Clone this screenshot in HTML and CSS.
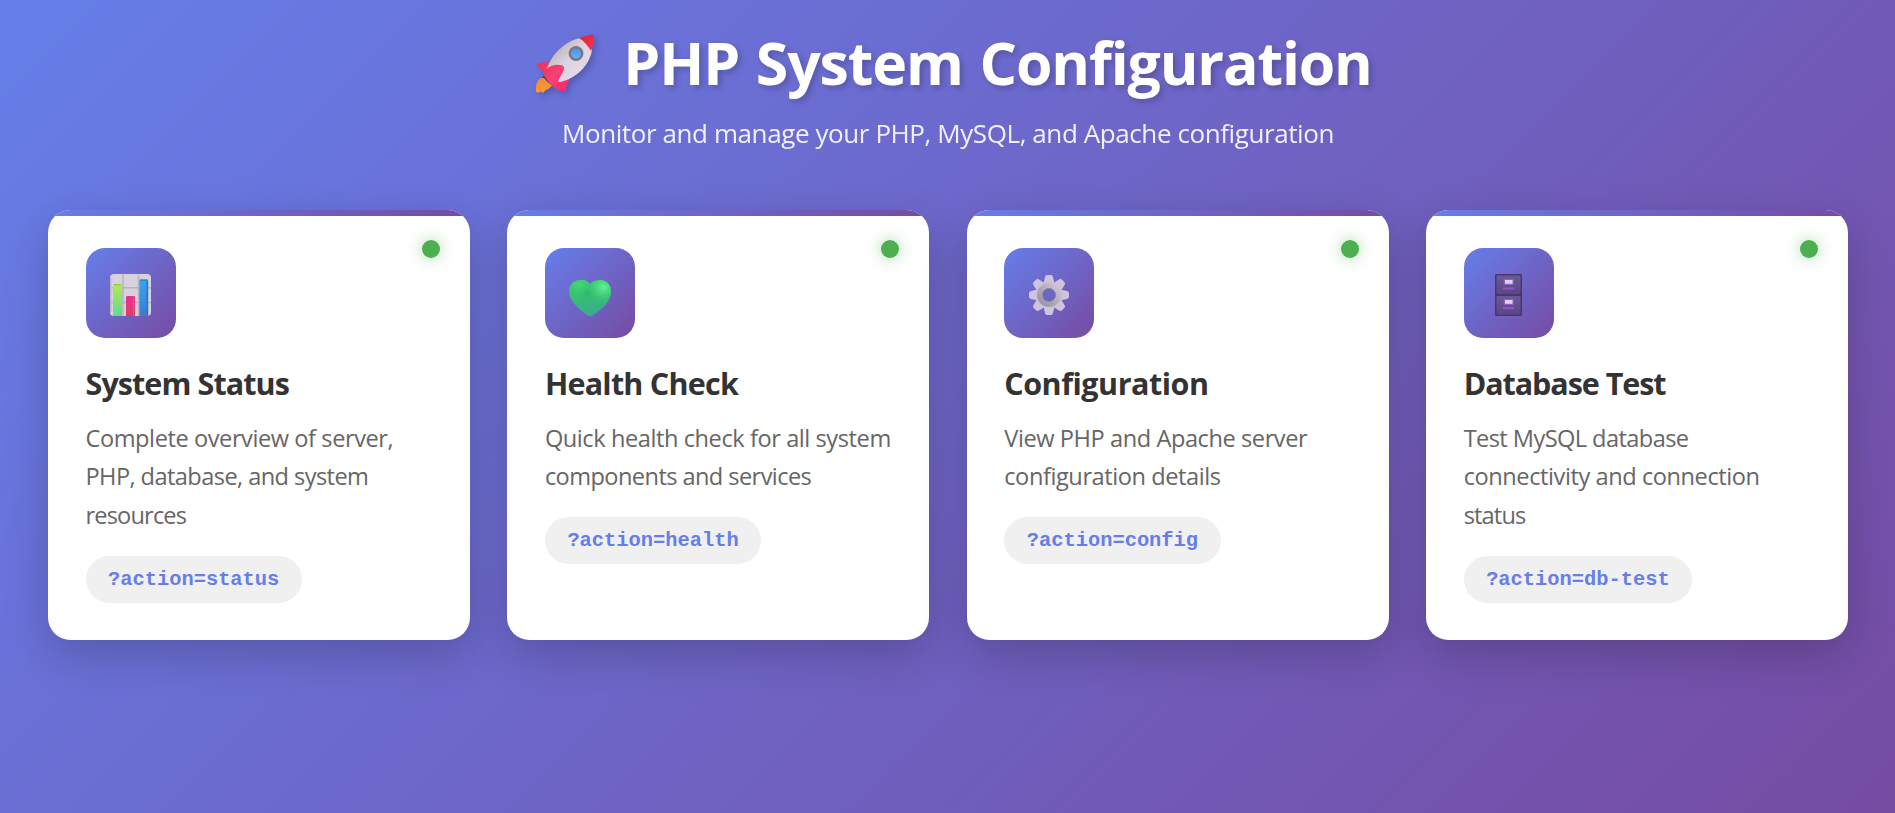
FILE: index.html
```html
<!DOCTYPE html>
<html lang="en">
<head>
<meta charset="utf-8">
<title>PHP System Configuration</title>
<link rel="stylesheet" href="styles.css">
</head>
<body>
<div class="container">
  <header class="header">
    <h1 class="title">
      <svg class="rocket" viewBox="0 0 100 85" aria-hidden="true">
        <defs>
          <linearGradient id="hull" x1="0" y1="0" x2="1" y2="1"><stop offset=".15" stop-color="#b9b1b8"/><stop offset=".5" stop-color="#dcd4df"/><stop offset="1" stop-color="#eadcf2"/></linearGradient>
          <linearGradient id="fin" x1="0" y1="0" x2="1" y2="1"><stop offset="0" stop-color="#e83558"/><stop offset=".5" stop-color="#ff3f78"/><stop offset="1" stop-color="#f02866"/></linearGradient>
          <linearGradient id="nose" x1="0" y1="0" x2="1" y2="1"><stop offset="0" stop-color="#c82b45"/><stop offset=".5" stop-color="#f0283e"/><stop offset="1" stop-color="#f63569"/></linearGradient>
          <linearGradient id="flame" x1="0" y1="0" x2="0" y2="1"><stop offset="0" stop-color="#f08a3a"/><stop offset="1" stop-color="#fb9a2c"/></linearGradient>
          <linearGradient id="glass" x1="0" y1="0" x2="0" y2="1"><stop offset="0" stop-color="#4593ea"/><stop offset="1" stop-color="#64b4ff"/></linearGradient>
        </defs>
        <path d="M25 55l8 12-3 2-7-11z" fill="#4c3f72"/>
        <path d="M23 58c-4 1-6 5-6 10v3c0 1 1 2 2 1.500l3-1 2 1.500 2-2.500c3-1 6-3 7-5-3-2-6-5-8-7.500z" fill="url(#flame)"/>
        <path d="M30 42l-10 1c-1 .5-2 1.500-2 3l10 8zM49 54l1 5-4 12c0 1-1 1.500-2 1L33 61z" fill="url(#fin)"/>
        <path d="M61 18C47 21 33 33 28 49c-1 3 0 5 2 7l7 5c2 1.500 4 1.300 6 .5C60 57 71 43 73 30c-3-6-7-9-12-12z" fill="url(#hull)"/>
        <path d="M24 53c3-4 8-8 12-8 4-.5 8 0 9 2 1 4-5 10-6 16l6 9C37 71 29 63 24 53z" fill="url(#fin)"/>
        <path d="M60 18l10-3c4-1 6 0 5 4-.5 4-1.500 8-3 12-3-5-7-10-12-13z" fill="url(#nose)"/>
        <circle cx="57" cy="33.500" r="7.400" fill="#7b7585"/><circle cx="57" cy="33.500" r="5" fill="url(#glass)"/>
      </svg>
      <span class="title-text">PHP System Configuration</span>
    </h1>
    <p class="subtitle">Monitor and manage your PHP, MySQL, and Apache configuration</p>
  </header>
  <main class="grid">
    <article class="card">
      <span class="dot"></span>
      <div class="icon">
        <svg class="glyph" viewBox="0 0 90 90" aria-hidden="true">
          <defs>
            <linearGradient id="lime" x1="0" y1="0" x2="0" y2="1"><stop offset="0" stop-color="#b4e957"/><stop offset="1" stop-color="#60da91"/></linearGradient>
            <linearGradient id="pink" x1="0" y1="0" x2="0" y2="1"><stop offset="0" stop-color="#e83390"/><stop offset="1" stop-color="#e43a66"/></linearGradient>
            <linearGradient id="blue" x1="0" y1="0" x2="0" y2="1"><stop offset="0" stop-color="#35a5f4"/><stop offset="1" stop-color="#3b7dcc"/></linearGradient>
          </defs>
          <rect x="24" y="26" width="41" height="42" rx="4" fill="#d8d1de"/>
          <path d="M37 26.500v41M52.500 26.500v41M24 39.800h41M24 54.500h41" stroke="#b9b2c0" stroke-width="1.500"/>
          <path d="M24.700 30v34" stroke="#bdb5c4" stroke-width="1.400"/>
          <path d="M27 68V37.500c0-1 .5-1.500 1.500-1.500h6c1 0 1.500.5 1.500 1.500V68z" fill="url(#lime)"/>
          <path d="M40 68V49.500c0-1 .5-1.500 1.500-1.500h6c1 0 1.500.5 1.500 1.500V68z" fill="url(#pink)"/>
          <path d="M53.300 68V32.700c0-1 .5-1.500 1.500-1.500h6c1 0 1.500.5 1.500 1.500V68z" fill="url(#blue)"/>
          <path d="M61.200 33v34" stroke="#2d6eb8" stroke-width="1.200"/><path d="M54 32.200h7.500" stroke="#297dc5"/>
          <path d="M47.500 49.500V67" stroke="#f0507f" stroke-width="1.200"/><path d="M28 36.800h7" stroke="#83bd50"/>
        </svg>
      </div>
      <h2 class="name name-status">System Status</h2>
      <p class="desc"><span class="fit-s">Complete overview of server,</span><br><span class="fit-m">PHP, database, and system</span><br><span class="fit-l">resources</span></p>
      <code class="action">?action=status</code>
    </article>
    <article class="card">
      <span class="dot"></span>
      <div class="icon">
        <svg class="glyph" viewBox="0 0 90 90" aria-hidden="true">
          <defs>
            <linearGradient id="leaf" x1="0" y1="0" x2=".2" y2="1"><stop offset="0" stop-color="#37c86b"/><stop offset=".55" stop-color="#35bf73"/><stop offset="1" stop-color="#3caa91"/></linearGradient>
            <radialGradient id="shineR" cx=".82" cy=".2" r=".4"><stop offset="0" stop-color="#65ef91"/><stop offset="1" stop-color="#45d77b" stop-opacity="0"/></radialGradient>
            <radialGradient id="shineL" cx=".24" cy=".12" r=".34"><stop offset="0" stop-color="#46d675"/><stop offset="1" stop-color="#3fce73" stop-opacity="0"/></radialGradient>
            <radialGradient id="fold" cx=".45" cy=".32" r=".26"><stop offset="0" stop-color="#249d5e" stop-opacity=".3"/><stop offset="1" stop-color="#249d5e" stop-opacity="0"/></radialGradient>
            <path id="heart" d="M45 36c-3-4-8-5-13-3.500-5 1.500-8 5.500-8 10.500 0 10 10 18 18 24 2 1.500 4.500 1.500 6.500 0C57 61 66 54 66 43c0-6-4.500-11-10.500-11-4 0-7.500 1-10.500 4z"/>
          </defs>
          <use href="#heart" fill="url(#leaf)"/>
          <use href="#heart" fill="url(#fold)"/>
          <use href="#heart" fill="url(#shineR)"/>
          <use href="#heart" fill="url(#shineL)"/>
        </svg>
      </div>
      <h2 class="name name-health">Health Check</h2>
      <p class="desc"><span class="fit-s">Quick health check for all system</span><br><span class="fit-m">components and services</span></p>
      <code class="action">?action=health</code>
    </article>
    <article class="card">
      <span class="dot"></span>
      <div class="icon">
        <svg class="glyph" viewBox="0 0 90 90" aria-hidden="true">
          <defs>
            <linearGradient id="ring" x1="1" y1="0" x2="0" y2="1"><stop offset="0" stop-color="#cec5d3"/><stop offset="1" stop-color="#9992a4"/></linearGradient>
            <path id="tooth" d="M39 38l2-9c.4-1.500 1.200-2 2.500-2h3c1.300 0 2.100.5 2.500 2l2 9z"/>
          </defs>
          <g fill="#cfc4dd">
            <use href="#tooth"/><use href="#tooth" transform="rotate(45 45 47)"/><use href="#tooth" transform="rotate(90 45 47)"/><use href="#tooth" transform="rotate(135 45 47)"/><use href="#tooth" transform="rotate(180 45 47)"/><use href="#tooth" transform="rotate(225 45 47)"/><use href="#tooth" transform="rotate(270 45 47)"/><use href="#tooth" transform="rotate(315 45 47)"/>
            <circle cx="45" cy="47" r="10" fill="none" stroke="#cbc0d8" stroke-width="7"/>
            <circle cx="45" cy="47" r="9" fill="none" stroke="url(#ring)" stroke-width="5.800"/>
            <circle cx="45" cy="47" r="6.500" fill="#6c66c5" stroke="#8a82a0" stroke-width="1"/>
          </g>
        </svg>
      </div>
      <h2 class="name name-config">Configuration</h2>
      <p class="desc"><span class="fit-s">View PHP and Apache server</span><br><span class="fit-s">configuration details</span></p>
      <code class="action">?action=config</code>
    </article>
    <article class="card">
      <span class="dot"></span>
      <div class="icon">
        <svg class="glyph" viewBox="0 0 90 90" aria-hidden="true">
          <defs><linearGradient id="drawer" x1="0" y1="0" x2="0" y2="1"><stop offset="0" stop-color="#6a5998"/><stop offset="1" stop-color="#5d4686"/></linearGradient></defs>
          <rect x="31" y="26" width="27" height="42" rx="1.500" fill="#4c356f"/>
          <rect x="32.500" y="27.500" width="24" height="18.500" rx="1.200" fill="url(#drawer)"/>
          <rect x="32.500" y="48" width="24" height="18.500" rx="1.200" fill="url(#drawer)"/>
          <rect x="39.700" y="30.800" width="10" height="6.200" fill="#8d60c4"/><rect x="41" y="32" width="7.500" height="3.800" fill="#ded1ee"/>
          <rect x="39.700" y="50.800" width="10" height="6.200" fill="#8d60c4"/><rect x="41" y="52" width="7.500" height="3.800" fill="#ded1ee"/>
          <path d="M39 40.500h11M39 60.200h11" stroke="#8e58c8" stroke-width="2.200"/>
        </svg>
      </div>
      <h2 class="name name-database">Database Test</h2>
      <p class="desc"><span class="fit-m">Test MySQL database</span><br><span class="fit-s">connectivity and connection</span><br><span class="fit-l">status</span></p>
      <code class="action">?action=db-test</code>
    </article>
  </main>
</div>
</body>
</html>
```
FILE: styles.css
```css
* { box-sizing: border-box; margin: 0; padding: 0; }
body {
  min-height: 100vh;
  padding: 24px 30px 24px 31px;
  background: linear-gradient(135deg, #667eea 0%, #764ba2 100%);
  font-family: "Open Sans", "Noto Sans", sans-serif;
}
.container { width: 1800px; margin: 0 auto; }
.header { height: 186px; color: #fff; text-align: center; }
.title {
  display: flex;
  justify-content: center;
  align-items: center;
  height: 77px;
  font-size: 59px;
  line-height: 77px;
  letter-spacing: -1.15px;
  word-spacing: 2.6px;
  white-space: nowrap;
}
.title-text { text-shadow: 3px 3px 6px rgba(0, 0, 0, .2); }
.rocket {
  width: 100px;
  height: 85px;
  margin: 0 4px 0 -5px;
  filter: drop-shadow(3px 3px 3px rgba(0, 0, 0, .2));
}
.subtitle {
  margin-top: 14px;
  font-size: 26px;
  line-height: 36px;
  letter-spacing: -.41px;
  opacity: .9;
  white-space: nowrap;
}
.grid { display: grid; grid-template-columns: repeat(4, 1fr); gap: 37.5px; }
.card {
  position: relative;
  overflow: hidden;
  height: 429.500px;
  padding: 38px 37.5px 37px;
  border-radius: 22.5px;
  background: #fff;
  box-shadow: 0 15px 45px rgba(0, 0, 0, .2);
}
.card::before {
  content: "";
  position: absolute;
  top: 0;
  left: 0;
  right: 0;
  height: 6px;
  background: linear-gradient(90deg, #667eea, #764ba2);
}
.dot {
  position: absolute;
  top: 30px;
  right: 30px;
  width: 18px;
  height: 18px;
  border-radius: 50%;
  background: #4caf50;
  box-shadow: 0 0 15px rgba(76, 175, 80, .5);
}
.icon {
  width: 90px;
  height: 90px;
  border-radius: 19px;
  background: linear-gradient(135deg, #667eea 0%, #764ba2 100%);
}
.glyph { display: block; width: 90px; height: 90px; }
.name { margin-top: 23.5px; color: #333; font-size: 30.5px; line-height: 42px; white-space: nowrap; }
.name-status { letter-spacing: -.92px; }
.name-health { letter-spacing: -.77px; }
.name-config { letter-spacing: -.48px; }
.name-database { letter-spacing: -1.05px; }
.desc { margin-top: 15px; color: #666; font-size: 23.6px; line-height: 38.5px; white-space: nowrap; }
.fit-s { letter-spacing: -.43px; }
.fit-m { letter-spacing: -.58px; }
.fit-l { letter-spacing: -.84px; }
.action {
  display: inline-block;
  margin-top: 21.5px;
  padding: 12px 22.5px;
  border-radius: 23.5px;
  background: #f0f0f0;
  color: #667eea;
  font-family: "Liberation Mono", monospace;
  font-size: 20.4px;
  font-weight: 700;
  line-height: 23px;
}
```
